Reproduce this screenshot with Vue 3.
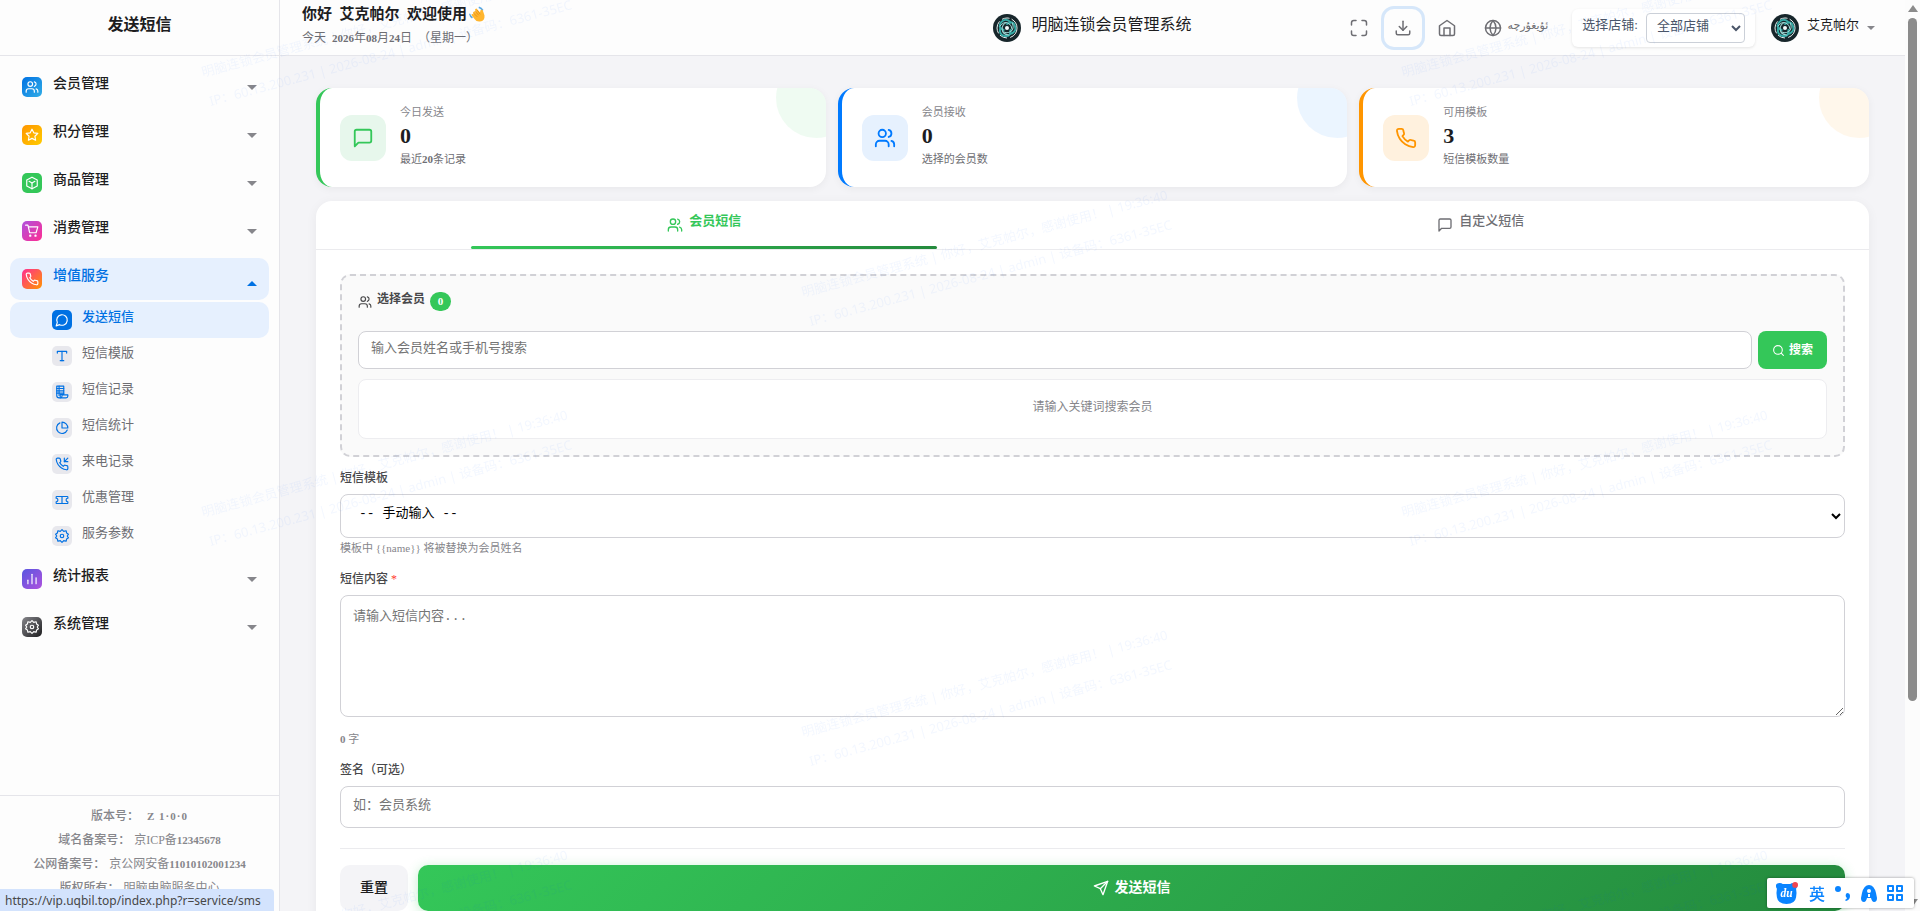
<template>
  <div class="app-shell">
    <aside class="sidebar">
      <div class="sidebar-header">发送短信</div>

      <nav class="sidebar-nav">
        <div v-for="item in menus" :key="item.text" class="menu-group">
          <a href="#" class="menu-item" :class="{ open: item.children }">
            <span class="menu-icon" :class="item.color">
              <svg viewBox="0 0 24 24"><path v-for="d in icons[item.icon]" :key="d" :d="d" /></svg>
            </span>
            <span class="menu-text">{{ item.text }}</span>
            <span class="caret"></span>
          </a>
          <div v-if="item.children" class="submenu">
            <a
              v-for="sub in item.children"
              :key="sub.text"
              href="#"
              class="submenu-item"
              :class="{ active: sub.active }"
            >
              <span class="submenu-icon">
                <svg viewBox="0 0 24 24"><path v-for="d in icons[sub.icon]" :key="d" :d="d" /></svg>
              </span>
              <span class="menu-text">{{ sub.text }}</span>
            </a>
          </div>
        </div>
      </nav>

      <div class="sidebar-footer">
        <div class="footer-line version"><strong>版本号：</strong><b>Z 1·0·0</b></div>
        <div class="footer-line"><strong>域名备案号：</strong><span>京ICP备<b>12345678</b></span></div>
        <div class="footer-line"><strong>公网备案号：</strong><span>京公网安备<b>11010102001234</b></span></div>
        <div class="footer-line"><strong>版权所有：</strong><span>明脑电脑服务中心</span></div>
      </div>
    </aside>

    <div class="main">
      <header class="topbar">
        <div class="greeting">
          <h1>
            你好&nbsp; 艾克帕尔&nbsp; 欢迎使用
            <svg class="wave" viewBox="0 0 32 32">
              <path fill="#5aa9e6" d="M2 15q2 5 6 7l-2 3q-5-3-6-9zM20 1q6 1 9 7l-3 2q-2-4-7-6z" />
              <path
                fill="#ffb52e"
                d="M9 12q2-3 4 0l2 2-3-6q0-3 3-3l7 8q0-5 3-6 3 0 4 6l2 6q1 11-9 12-7 1-11-5l-6-8q0-3 3-2l2 1-2-3q0-2 1-2z"
              />
              <path fill="none" stroke="#e08a12" stroke-width="1.5" d="M10 15l6 6M13 11l6 7M17 9l5 7" />
            </svg>
          </h1>
          <p>今天&nbsp; <b>2026</b>年<b>08</b>月<b>24</b>日&nbsp; （星期一）</p>
        </div>

        <div class="brand">
          <svg class="logo" viewBox="0 0 28 28">
            <use href="#brand-mark" />
          </svg>
          <span>明脑连锁会员管理系统</span>
        </div>

        <div class="toolbar">
          <button
            v-for="tool in tools"
            :key="tool.icon"
            type="button"
            class="tool-btn"
            :class="{ focused: tool.focused }"
            :aria-label="tool.label"
          >
            <svg viewBox="0 0 24 24"><path v-for="d in icons[tool.icon]" :key="d" :d="d" /></svg>
          </button>
          <button type="button" class="lang-btn">
            <svg viewBox="0 0 24 24"><path v-for="d in icons.globe" :key="d" :d="d" /></svg>
            <span lang="ug">ئۇيغۇرچە</span>
          </button>
          <div class="store-box">
            <label for="store">选择店铺:</label>
            <select id="store" v-model="store">
              <option value="all">全部店铺</option>
            </select>
          </div>
          <button type="button" class="user-btn">
            <svg class="logo" viewBox="0 0 28 28">
              <use href="#brand-mark" />
            </svg>
            <span>艾克帕尔</span>
            <i class="caret"></i>
          </button>
        </div>
      </header>

      <main class="content">
        <section class="stats">
          <article v-for="stat in stats" :key="stat.label" class="stat-card" :class="stat.color">
            <div class="stat-icon">
              <svg viewBox="0 0 24 24"><path v-for="d in icons[stat.icon]" :key="d" :d="d" /></svg>
            </div>
            <div class="stat-info">
              <div class="stat-label">{{ stat.label }}</div>
              <div class="stat-value">{{ stat.value }}</div>
              <div class="stat-sub">{{ stat.before }}<b>{{ stat.count }}</b>{{ stat.after }}</div>
            </div>
          </article>
        </section>

        <section class="panel">
          <div class="tabs">
            <button
              v-for="tab in tabs"
              :key="tab.key"
              type="button"
              class="tab"
              :class="{ active: activeTab === tab.key }"
              @click="activeTab = tab.key"
            >
              <svg viewBox="0 0 24 24"><path v-for="d in icons[tab.icon]" :key="d" :d="d" /></svg>
              <span>{{ tab.text }}</span>
            </button>
          </div>

          <form class="panel-body" @submit.prevent>
            <div class="member-box">
              <div class="member-title">
                <svg viewBox="0 0 24 24"><path v-for="d in icons.users" :key="d" :d="d" /></svg>
                <label for="keyword">选择会员</label>
                <span class="badge">{{ selected.length }}</span>
              </div>
              <div class="search-row">
                <input id="keyword" v-model="keyword" type="text" placeholder="输入会员姓名或手机号搜索" />
                <button type="button" class="search-btn">
                  <svg viewBox="0 0 24 24"><path v-for="d in icons.search" :key="d" :d="d" /></svg>
                  <span>搜索</span>
                </button>
              </div>
              <div class="search-result">请输入关键词搜索会员</div>
            </div>

            <div class="form-group">
              <label for="template">短信模板</label>
              <select id="template" v-model="template">
                <option value="">-- 手动输入 --</option>
              </select>
              <div class="hint">模板中 <span v-pre>{{name}}</span> 将被替换为会员姓名</div>
            </div>

            <div class="form-group">
              <label for="message">短信内容 <span class="required">*</span></label>
              <textarea id="message" v-model="message" placeholder="请输入短信内容..."></textarea>
              <div class="counter"><b>{{ message.length }}</b> 字</div>
            </div>

            <div class="form-group">
              <label for="sign">签名（可选）</label>
              <input id="sign" v-model="sign" type="text" placeholder="如：会员系统" />
            </div>

            <div class="actions">
              <button type="reset" class="reset-btn"><span>重置</span></button>
              <button type="submit" class="send-btn">
                <svg viewBox="0 0 24 24"><path v-for="d in icons.send" :key="d" :d="d" /></svg>
                <span>发送短信</span>
              </button>
            </div>
          </form>
        </section>
      </main>
    </div>

    <div class="scrollbar">
      <i class="arrow up"></i>
      <div class="thumb"></div>
      <i class="arrow down"></i>
    </div>

    <svg class="watermark" aria-hidden="true">
      <g v-for="(mark, i) in marks" :key="i" :transform="`translate(${mark.x} ${mark.y}) rotate(-15)`">
        <text x="0" y="0">明脑连锁会员管理系统 | 你好，艾克帕尔，感谢使用！ | 19:36:40</text>
        <text x="0" y="30">IP：60.13.200.231 | 2026-08-24 | admin | 设备码：6361-35EC</text>
      </g>
    </svg>

    <div class="status-url">https://vip.uqbil.top/index.php?r=service/sms</div>

    <div class="ime-bar">
      <svg class="ime-bear" viewBox="0 0 24 24">
        <path
          fill="#0a84ff"
          d="M1 4q0-3 4-3 2 0 3 1h8q1-1 3-1 4 0 4 3 0 2-1 3 1 5 0 9-1 7-10 7T2 16q-1-4 0-9-1-1-1-3z"
        />
        <text x="12" y="16">du</text>
        <circle cx="21" cy="3" r="3" fill="#f0444f" />
      </svg>
      <span>英</span>
      <svg viewBox="0 0 20 20">
        <circle cx="5" cy="6" r="3" />
        <path d="M14 10a3 3 0 0 1 3 3q0 4-4 5l-1-1q2-1 2-2a3 3 0 0 1 0-5z" />
      </svg>
      <svg viewBox="0 0 20 20">
        <path
          fill-rule="evenodd"
          d="M10 2q5 0 7 8l1 5q0 4-3 4-2 0-3-4H8q-1 4-3 4-3 0-3-4l1-5q2-8 7-8zm0 4a2 2 0 1 0 0 4 2 2 0 0 0 0-4zm-1 5h2v3H9z"
        />
      </svg>
      <svg class="ime-grid" viewBox="0 0 20 20">
        <path d="M3 3h5v5H3zM12 3h5v5h-5zM3 12h5v5H3zM12 12h5v5h-5z" />
      </svg>
    </div>

    <svg class="defs" aria-hidden="true">
      <symbol id="brand-mark" viewBox="0 0 28 28">
        <circle cx="14" cy="14" r="14" fill="#17262b" />
        <circle
          cx="14"
          cy="14"
          r="10"
          fill="none"
          stroke="#e6f2f1"
          stroke-width="1"
          stroke-dasharray="12 4 7 3"
        />
        <g fill="none" stroke="#35a9a5" stroke-width="2">
          <path d="M14 10q6-4 8 2t-5 8" />
          <path d="M14 10q6-4 8 2t-5 8" transform="rotate(120 14 14)" />
          <path d="M14 10q6-4 8 2t-5 8" transform="rotate(240 14 14)" />
        </g>
        <g fill="none" stroke="#9fd8d5" stroke-width="1">
          <path d="M7 12q4-5 8-3t4 6" />
          <path d="M7 12q4-5 8-3t4 6" transform="rotate(120 14 14)" />
          <path d="M7 12q4-5 8-3t4 6" transform="rotate(240 14 14)" />
        </g>
        <circle cx="14" cy="14" r="2" fill="#f4fbfb" />
      </symbol>
    </svg>
  </div>
</template>

<script setup>
import { ref } from 'vue'

const phone =
  'M22 16.92v3a2 2 0 0 1-2.18 2 19.79 19.79 0 0 1-8.63-3.07 19.5 19.5 0 0 1-6-6 19.79 19.79 0 0 1-3.07-8.67A2 2 0 0 1 4.11 2h3a2 2 0 0 1 2 1.72c.13.96.36 1.9.7 2.81a2 2 0 0 1-.45 2.11L8.09 9.91a16 16 0 0 0 6 6l1.27-1.27a2 2 0 0 1 2.11-.45c.91.34 1.85.57 2.81.7A2 2 0 0 1 22 16.92z'

const icons = {
  users: [
    'M16 21v-2a4 4 0 0 0-4-4H6a4 4 0 0 0-4 4v2',
    'M5 7a4 4 0 1 0 8 0a4 4 0 1 0-8 0',
    'M22 21v-2a4 4 0 0 0-3-3.87',
    'M16 3.13a4 4 0 0 1 0 7.75'
  ],
  star: ['M12 2l3.09 6.26L22 9.27l-5 4.87 1.18 6.88L12 17.77l-6.18 3.25L7 14.14 2 9.27l6.91-1.01z'],
  box: ['M12 2l9 5v10l-9 5-9-5V7z', 'M12 22V12', 'M17 9l-5 3-5-3'],
  cart: [
    'M1 2h4l3 13h11l3-10H6',
    'M8 20a1 1 0 1 0 2 0a1 1 0 1 0-2 0',
    'M17 20a1 1 0 1 0 2 0a1 1 0 1 0-2 0'
  ],
  phone: [phone],
  phoneIn: [phone, 'M16 2v6h6', 'M22 2l-6 6'],
  bubble: ['M7.9 20A9 9 0 1 0 4 16.1L2 22z'],
  type: ['M4 7V4h16v3', 'M12 4v16', 'M9 20h6'],
  record: [
    'M3 2h12v14H9v6H7a4 4 0 0 1-4-4z',
    'M7 2v16M3 6h12M3 10h12M3 14h12',
    'M9 22h10a3 3 0 0 0 3-3v-2H12v2a3 3 0 0 1-3 3z'
  ],
  pie: ['M21 15.5A9.5 9.5 0 1 1 8.5 3.2', 'M22 12A10 10 0 0 0 12 2v10z'],
  ticket: [
    'M2 9a3 3 0 0 1 0 6v2a1 1 0 0 0 1 1h18a1 1 0 0 0 1-1v-2a3 3 0 0 1 0-6V7a1 1 0 0 0-1-1H3a1 1 0 0 0-1 1z',
    'M12 6v12'
  ],
  gear: [
    'M12 1l3 3 4-1 1 4 3 2-2 3 2 3-3 2-1 4-4-1-3 3-3-3-4 1-1-4-3-2 2-3-2-3 3-2 1-4 4 1z',
    'M9 12a3 3 0 1 0 6 0a3 3 0 1 0-6 0'
  ],
  chart: ['M5 20v-6', 'M12 20V4', 'M19 20V10'],
  fullscreen: [
    'M8 2H5a3 3 0 0 0-3 3v3',
    'M16 2h3a3 3 0 0 1 3 3v3',
    'M22 16v3a3 3 0 0 1-3 3h-3',
    'M8 22H5a3 3 0 0 1-3-3v-3'
  ],
  download: ['M3 16v3a2 2 0 0 0 2 2h14a2 2 0 0 0 2-2v-3', 'M7 10l5 5 5-5', 'M12 15V3'],
  home: ['M2 9l10-7 10 7v11a2 2 0 0 1-2 2H4a2 2 0 0 1-2-2z', 'M8 22V12h8v10'],
  globe: [
    'M2 12a10 10 0 1 0 20 0a10 10 0 1 0-20 0',
    'M2 12h20',
    'M12 2a15 15 0 0 1 4 10 15 15 0 0 1-4 10 15 15 0 0 1-4-10 15 15 0 0 1 4-10z'
  ],
  message: ['M21 15a2 2 0 0 1-2 2H7l-4 4V5a2 2 0 0 1 2-2h14a2 2 0 0 1 2 2z'],
  search: ['M3 11a8 8 0 1 0 16 0a8 8 0 1 0-16 0', 'M21 21l-4-4'],
  send: ['M22 2L11 13', 'M22 2l-7 20-4-9-9-4z']
}

const menus = [
  { text: '会员管理', icon: 'users', color: 'blue' },
  { text: '积分管理', icon: 'star', color: 'yellow' },
  { text: '商品管理', icon: 'box', color: 'green' },
  { text: '消费管理', icon: 'cart', color: 'pink' },
  {
    text: '增值服务',
    icon: 'phone',
    color: 'red',
    children: [
      { text: '发送短信', icon: 'bubble', active: true },
      { text: '短信模版', icon: 'type' },
      { text: '短信记录', icon: 'record' },
      { text: '短信统计', icon: 'pie' },
      { text: '来电记录', icon: 'phoneIn' },
      { text: '优惠管理', icon: 'ticket' },
      { text: '服务参数', icon: 'gear' }
    ]
  },
  { text: '统计报表', icon: 'chart', color: 'purple' },
  { text: '系统管理', icon: 'gear', color: 'dark' }
]

const tools = [
  { icon: 'fullscreen', label: '全屏' },
  { icon: 'download', label: '下载', focused: true },
  { icon: 'home', label: '首页' }
]

const stats = [
  { label: '今日发送', value: 0, before: '最近', count: '20', after: '条记录', icon: 'message', color: 'green' },
  { label: '会员接收', value: 0, before: '选择的会员数', icon: 'users', color: 'blue' },
  { label: '可用模板', value: 3, before: '短信模板数量', icon: 'phone', color: 'orange' }
]

const tabs = [
  { key: 'member', text: '会员短信', icon: 'users' },
  { key: 'custom', text: '自定义短信', icon: 'message' }
]

// staggered grid, every second row is shifted by half a step
const marks = []
for (let row = 0; row < 5; row++) {
  for (let col = 0; col < 2 - (row % 2); col++) {
    marks.push({ x: 203 + col * 1200 + (row % 2) * 600, y: 77 + row * 220 })
  }
}

const activeTab = ref('member')
const store = ref('all')
const selected = ref([])
const keyword = ref('')
const template = ref('')
const message = ref('')
const sign = ref('')
</script>

<style>
body {
  margin: 0;
  background: #f4f4f7;
}
</style>

<style scoped>
* {
  box-sizing: border-box;
}

.app-shell {
  display: flex;
  height: 100vh;
  overflow: hidden;
  color: #1d1d1f;
  font-family: "Liberation Serif", "Noto Sans CJK SC", serif;
  font-size: 13px;
  line-height: 20px;
}

button,
input,
select,
textarea {
  font-family: inherit;
  font-size: 13px;
  line-height: 20px;
}

button {
  border: 0;
  background: none;
  cursor: pointer;
}

a {
  color: inherit;
  text-decoration: none;
}

svg {
  flex-shrink: 0;
  fill: none;
  stroke: currentColor;
  stroke-width: 2;
  stroke-linecap: round;
  stroke-linejoin: round;
}

.defs {
  position: absolute;
  width: 0;
  height: 0;
}

.logo {
  width: 28px;
  height: 28px;
  stroke: none;
}

.caret {
  border: 5px solid transparent;
  border-top-color: #86868b;
  border-bottom: 0;
}

/* sidebar */
.sidebar {
  display: flex;
  flex-direction: column;
  flex: 0 0 280px;
  border-right: 1px solid #e5e5ea;
  background: #fdfdfd;
}

.sidebar-header {
  flex: 0 0 56px;
  padding-bottom: 6px;
  border-bottom: 1px solid #e5e5ea;
  font-size: 16px;
  font-weight: 600;
  line-height: 49px;
  text-align: center;
}

.sidebar-nav {
  flex: 1;
  padding: 10px;
  min-height: 0;
  overflow: hidden;
}

.menu-group {
  padding-bottom: 4px;
}

.menu-item,
.submenu-item {
  display: flex;
  align-items: center;
  border-radius: 10px;
}

.menu-item {
  gap: 11px;
  height: 42px;
  margin-bottom: 2px;
  padding: 0 12px;
  font-size: 14px;
  font-weight: 500;
}

.menu-text {
  flex: 1;
  padding-bottom: 6px;
}

.menu-item.open,
.submenu-item.active {
  background: #e6f0fe;
  color: #0071e3;
}

.menu-item.open .caret {
  margin-top: 8px;
  border-top: 0;
  border-bottom: 5px solid #0071e3;
}

.menu-icon,
.submenu-icon {
  display: flex;
  align-items: center;
  justify-content: center;
  width: 20px;
  height: 20px;
  border-radius: 5px;
  color: #fff;
}

.menu-icon svg,
.submenu-icon svg {
  width: 14px;
  height: 14px;
}

.menu-icon.blue { background: linear-gradient(135deg, #0071e3, #32ade6); }
.menu-icon.yellow { background: linear-gradient(135deg, #ff9500, #ffcc00); }
.menu-icon.green { background: #34c759; }
.menu-icon.pink { background: linear-gradient(135deg, #af52de, #ff2d92); }
.menu-icon.red { background: linear-gradient(135deg, #ff2d92, #ff9500); }
.menu-icon.purple { background: linear-gradient(135deg, #5856e0, #af52de); }
.menu-icon.dark { background: linear-gradient(135deg, #86868b, #1d1d1f); }

.submenu-item {
  gap: 10px;
  height: 36px;
  padding-left: 42px;
  color: #6e6e73;
}

.submenu-item.active {
  font-weight: 500;
}

.submenu-icon {
  background: #e8e8ed;
  color: #0071e3;
}

.submenu-item.active .submenu-icon {
  background: #0071e3;
  color: #fff;
}

.sidebar-footer {
  flex: 0 0 116px;
  padding-top: 8px;
  border-top: 1px solid #e5e5ea;
  overflow: hidden;
  color: #86868b;
  font-size: 12px;
  line-height: 24px;
  text-align: center;
}

.footer-line strong {
  margin-right: 4px;
  font-weight: 500;
}

.footer-line b,
.greeting p b {
  font-size: 11px;
}

.version b {
  margin-left: 4px;
  letter-spacing: 1px;
}

/* top bar */
.main {
  display: flex;
  flex-direction: column;
  flex: 1;
  min-width: 0;
}

.topbar {
  display: grid;
  grid-template-columns: 1fr auto 1fr;
  align-items: center;
  flex: 0 0 56px;
  padding: 0 22px;
  border-bottom: 1px solid #e5e5ea;
  background: #fdfdfd;
}

.greeting {
  padding-bottom: 4px;
}

.greeting h1 {
  display: flex;
  align-items: center;
  margin: 0;
  font-size: 15px;
  font-weight: 600;
  line-height: 24px;
}

.wave {
  width: 16px;
  height: 16px;
  margin-left: 2px;
  stroke: none;
}

.greeting p {
  margin: 0;
  color: #6e6e73;
  font-size: 12px;
  line-height: 24px;
}

.brand {
  display: flex;
  align-items: center;
  gap: 10px;
  font-size: 16px;
}

.brand span,
.user-btn span,
.store-box label {
  padding-bottom: 6px;
}

.toolbar {
  display: flex;
  align-items: center;
  justify-content: flex-end;
  padding-right: 8px;
}

.tool-btn {
  display: flex;
  align-items: center;
  justify-content: center;
  width: 38px;
  height: 38px;
  margin-right: 6px;
  padding: 0;
  border-radius: 10px;
  color: #6e6e73;
}

.tool-btn svg,
.lang-btn svg {
  width: 18px;
  height: 18px;
}

.tool-btn.focused {
  box-shadow: 0 0 0 3px #d6e7fa;
}

.lang-btn {
  display: flex;
  align-items: center;
  gap: 6px;
  margin-right: 12px;
  padding: 0 12px;
  color: #6e6e73;
}

.lang-btn span {
  padding-bottom: 4px;
  font-family: "DejaVu Sans", sans-serif;
  font-size: 11px;
}

.store-box {
  display: flex;
  align-items: center;
  gap: 8px;
  height: 38px;
  margin-right: 16px;
  padding: 0 10px;
  border-radius: 6px;
  background: #fff;
  box-shadow: 0 1px 3px rgba(0, 0, 0, 0.1);
  color: #4a5568;
  white-space: nowrap;
}

.store-box select {
  width: 99px;
  height: 30px;
  padding: 0 0 4px 6px;
  border: 1px solid #cbd0d8;
  border-radius: 4px;
  background: #fff;
  color: #4a5568;
}

.user-btn {
  display: flex;
  align-items: center;
  gap: 8px;
  padding: 0;
  color: #1d1d1f;
  white-space: nowrap;
}

.user-btn .caret {
  border-width: 4px 4px 0;
}

/* statistics */
.content {
  flex: 1;
  padding: 32px 36px;
  min-height: 0;
  overflow: hidden;
}

.stats {
  display: grid;
  grid-template-columns: repeat(3, 1fr);
  gap: 12px;
  margin-bottom: 14px;
}

.stat-card {
  position: relative;
  display: flex;
  align-items: center;
  gap: 14px;
  padding: 12px 20px 17px;
  border-left: 4px solid var(--accent);
  border-radius: 16px;
  overflow: hidden;
  background: #fff;
  box-shadow: 0 2px 8px rgba(0, 0, 0, 0.05);
}

.stat-card::after {
  content: "";
  position: absolute;
  top: -30px;
  right: -30px;
  width: 80px;
  height: 80px;
  border-radius: 50%;
  background: var(--accent);
  opacity: 0.08;
}

.stat-card.green { --accent: #34c759; --tint: #e7f7ec; }
.stat-card.blue { --accent: #007aff; --tint: #e6f1fe; }
.stat-card.orange { --accent: #ff9500; --tint: #fff1de; }

.stat-icon {
  display: flex;
  align-items: center;
  justify-content: center;
  width: 46px;
  height: 46px;
  margin-top: 5px;
  border-radius: 12px;
  background: var(--tint);
  color: var(--accent);
}

.stat-icon svg {
  width: 22px;
  height: 22px;
}

.stat-label,
.stat-sub {
  color: #86868b;
  font-size: 11px;
  line-height: 24px;
}

.stat-sub {
  color: #6e6e73;
  line-height: 22px;
}

.stat-value {
  font-size: 22px;
  font-weight: 700;
  line-height: 24px;
}

/* panel */
.panel {
  border-radius: 16px;
  background: #fff;
  box-shadow: 0 2px 12px rgba(0, 0, 0, 0.05);
}

.tabs {
  display: flex;
  border-bottom: 1px solid #ebebee;
}

.tab {
  position: relative;
  display: flex;
  align-items: center;
  justify-content: center;
  flex: 1;
  gap: 6px;
  height: 48px;
  padding: 0;
  color: #6e6e73;
  font-weight: 500;
}

.tab span {
  padding-bottom: 8px;
}

.tab svg {
  width: 16px;
  height: 16px;
}

.tab.active {
  color: #34c759;
  font-weight: 600;
}

.tab.active::after {
  content: "";
  position: absolute;
  bottom: 0;
  left: 20%;
  width: 60%;
  height: 3px;
  border-radius: 2px;
  background: linear-gradient(90deg, #34c759, #248a3d);
}

.panel-body {
  padding: 24px;
}

.member-box {
  margin-bottom: 10px;
  padding: 16px;
  border: 2px dashed #d1d1d6;
  border-radius: 10px;
  background: #fafafa;
}

.member-title {
  display: flex;
  align-items: center;
  gap: 5px;
  margin-bottom: 20px;
  color: #48484a;
  font-size: 12px;
  font-weight: 600;
  line-height: 19px;
}

.member-title svg {
  width: 14px;
  height: 14px;
}

.member-title label {
  padding-bottom: 4px;
  line-height: 15px;
}

.badge {
  min-width: 21px;
  border-radius: 10px;
  background: #34c759;
  color: #fff;
  font-size: 11px;
  text-align: center;
}

input,
textarea,
.form-group select {
  display: block;
  width: 100%;
  border: 1px solid #d1d1d6;
  border-radius: 8px;
  outline: none;
  background: #fff;
  color: #1d1d1f;
}

input {
  height: 42px;
  padding: 8px 12px 12px;
}

input::placeholder,
textarea::placeholder {
  color: #757575;
}

.search-row {
  display: flex;
  gap: 6px;
  margin-bottom: 10px;
}

.search-row input {
  flex: 1;
  height: 38px;
  padding: 6px 12px 10px;
}

.search-btn {
  display: flex;
  align-items: center;
  gap: 4px;
  padding: 0 14px;
  border-radius: 8px;
  background: #34c759;
  color: #fff;
  font-size: 12px;
  font-weight: 600;
}

.search-btn svg {
  width: 13px;
  height: 13px;
}

.search-result {
  padding: 17px 0 21px;
  border: 1px solid #ededf0;
  border-radius: 8px;
  background: #fff;
  color: #86868b;
  font-size: 12px;
  text-align: center;
}

.form-group {
  margin-bottom: 10px;
}

.form-group label {
  display: block;
  padding-bottom: 5px;
  color: #48484a;
  font-size: 12px;
  font-weight: 500;
  line-height: 22px;
}

.form-group select {
  height: 44px;
  padding: 0 0 6px 14px;
  color: #000;
}

.form-group select,
textarea {
  font-family: "Liberation Mono", "Noto Sans CJK SC", monospace;
}

.required {
  color: #ff3b30;
}

.hint,
.counter {
  color: #86868b;
  font-size: 11px;
}

textarea {
  height: 122px;
  padding: 11px 12px;
  resize: vertical;
}

.counter {
  padding-top: 12px;
}

.actions {
  display: flex;
  gap: 10px;
  margin-top: 20px;
  padding-top: 16px;
  border-top: 1px solid #ebebee;
}

.reset-btn,
.send-btn {
  height: 46px;
  padding: 0 20px;
  border-radius: 10px;
  font-size: 14px;
  font-weight: 600;
}

.reset-btn {
  background: #f4f4f7;
  color: #1d1d1f;
  font-weight: 500;
}

.send-btn {
  display: flex;
  align-items: center;
  justify-content: center;
  flex: 1;
  gap: 6px;
  background: linear-gradient(135deg, #34c759, #248a3d);
  box-shadow: 0 2px 12px rgba(52, 199, 89, 0.3);
  color: #fff;
}

.send-btn svg {
  width: 16px;
  height: 16px;
}

/* overlays */
.scrollbar {
  display: flex;
  flex-direction: column;
  align-items: center;
  flex: 0 0 15px;
  background: #fcfcfc;
}

.scrollbar .thumb {
  width: 9px;
  height: 75vh;
  margin: 6px 0 auto;
  border-radius: 5px;
  background: #8b8b8b;
}

.arrow {
  border: 5px solid transparent;
}

.arrow.up {
  margin-top: 5px;
  border-top: 0;
  border-bottom: 7px solid #8b8b8b;
}

.arrow.down {
  margin-bottom: 5px;
  border-bottom: 0;
  border-top: 7px solid #8b8b8b;
}

.watermark {
  position: fixed;
  inset: 0;
  width: 100%;
  height: 100%;
  fill: rgba(0, 100, 255, 0.05);
  stroke: none;
  font-family: "Noto Sans", "Noto Sans CJK SC", sans-serif;
  font-size: 13px;
  pointer-events: none;
}

.status-url {
  position: fixed;
  bottom: 0;
  left: 0;
  padding: 2px 13px 0 5px;
  border-radius: 0 4px 0 0;
  background: #d3e3fd;
  color: #474747;
  font-family: "Noto Sans", sans-serif;
  font-size: 12px;
}

.ime-bar {
  position: fixed;
  right: 6px;
  bottom: 3px;
  display: flex;
  align-items: center;
  gap: 6px;
  height: 30px;
  padding: 0 9px 0 8px;
  border-radius: 2px;
  background: #fff;
  box-shadow: 0 0 3px rgba(0, 0, 0, 0.4);
  color: #0a84ff;
  font-family: "Noto Sans CJK SC", sans-serif;
  font-size: 16px;
  font-weight: 500;
}

.ime-bar span {
  width: 20px;
  text-align: center;
}

.ime-bar svg {
  width: 20px;
  height: 20px;
  fill: currentColor;
  stroke: none;
}

.ime-bar .ime-bear {
  width: 23px;
  height: 23px;
  margin-right: 3px;
}

.ime-bear text {
  fill: #fff;
  font-family: "Liberation Serif", serif;
  font-size: 12px;
  font-style: italic;
  font-weight: 700;
  text-anchor: middle;
}

.ime-bar .ime-grid {
  fill: none;
  stroke: currentColor;
}
</style>
